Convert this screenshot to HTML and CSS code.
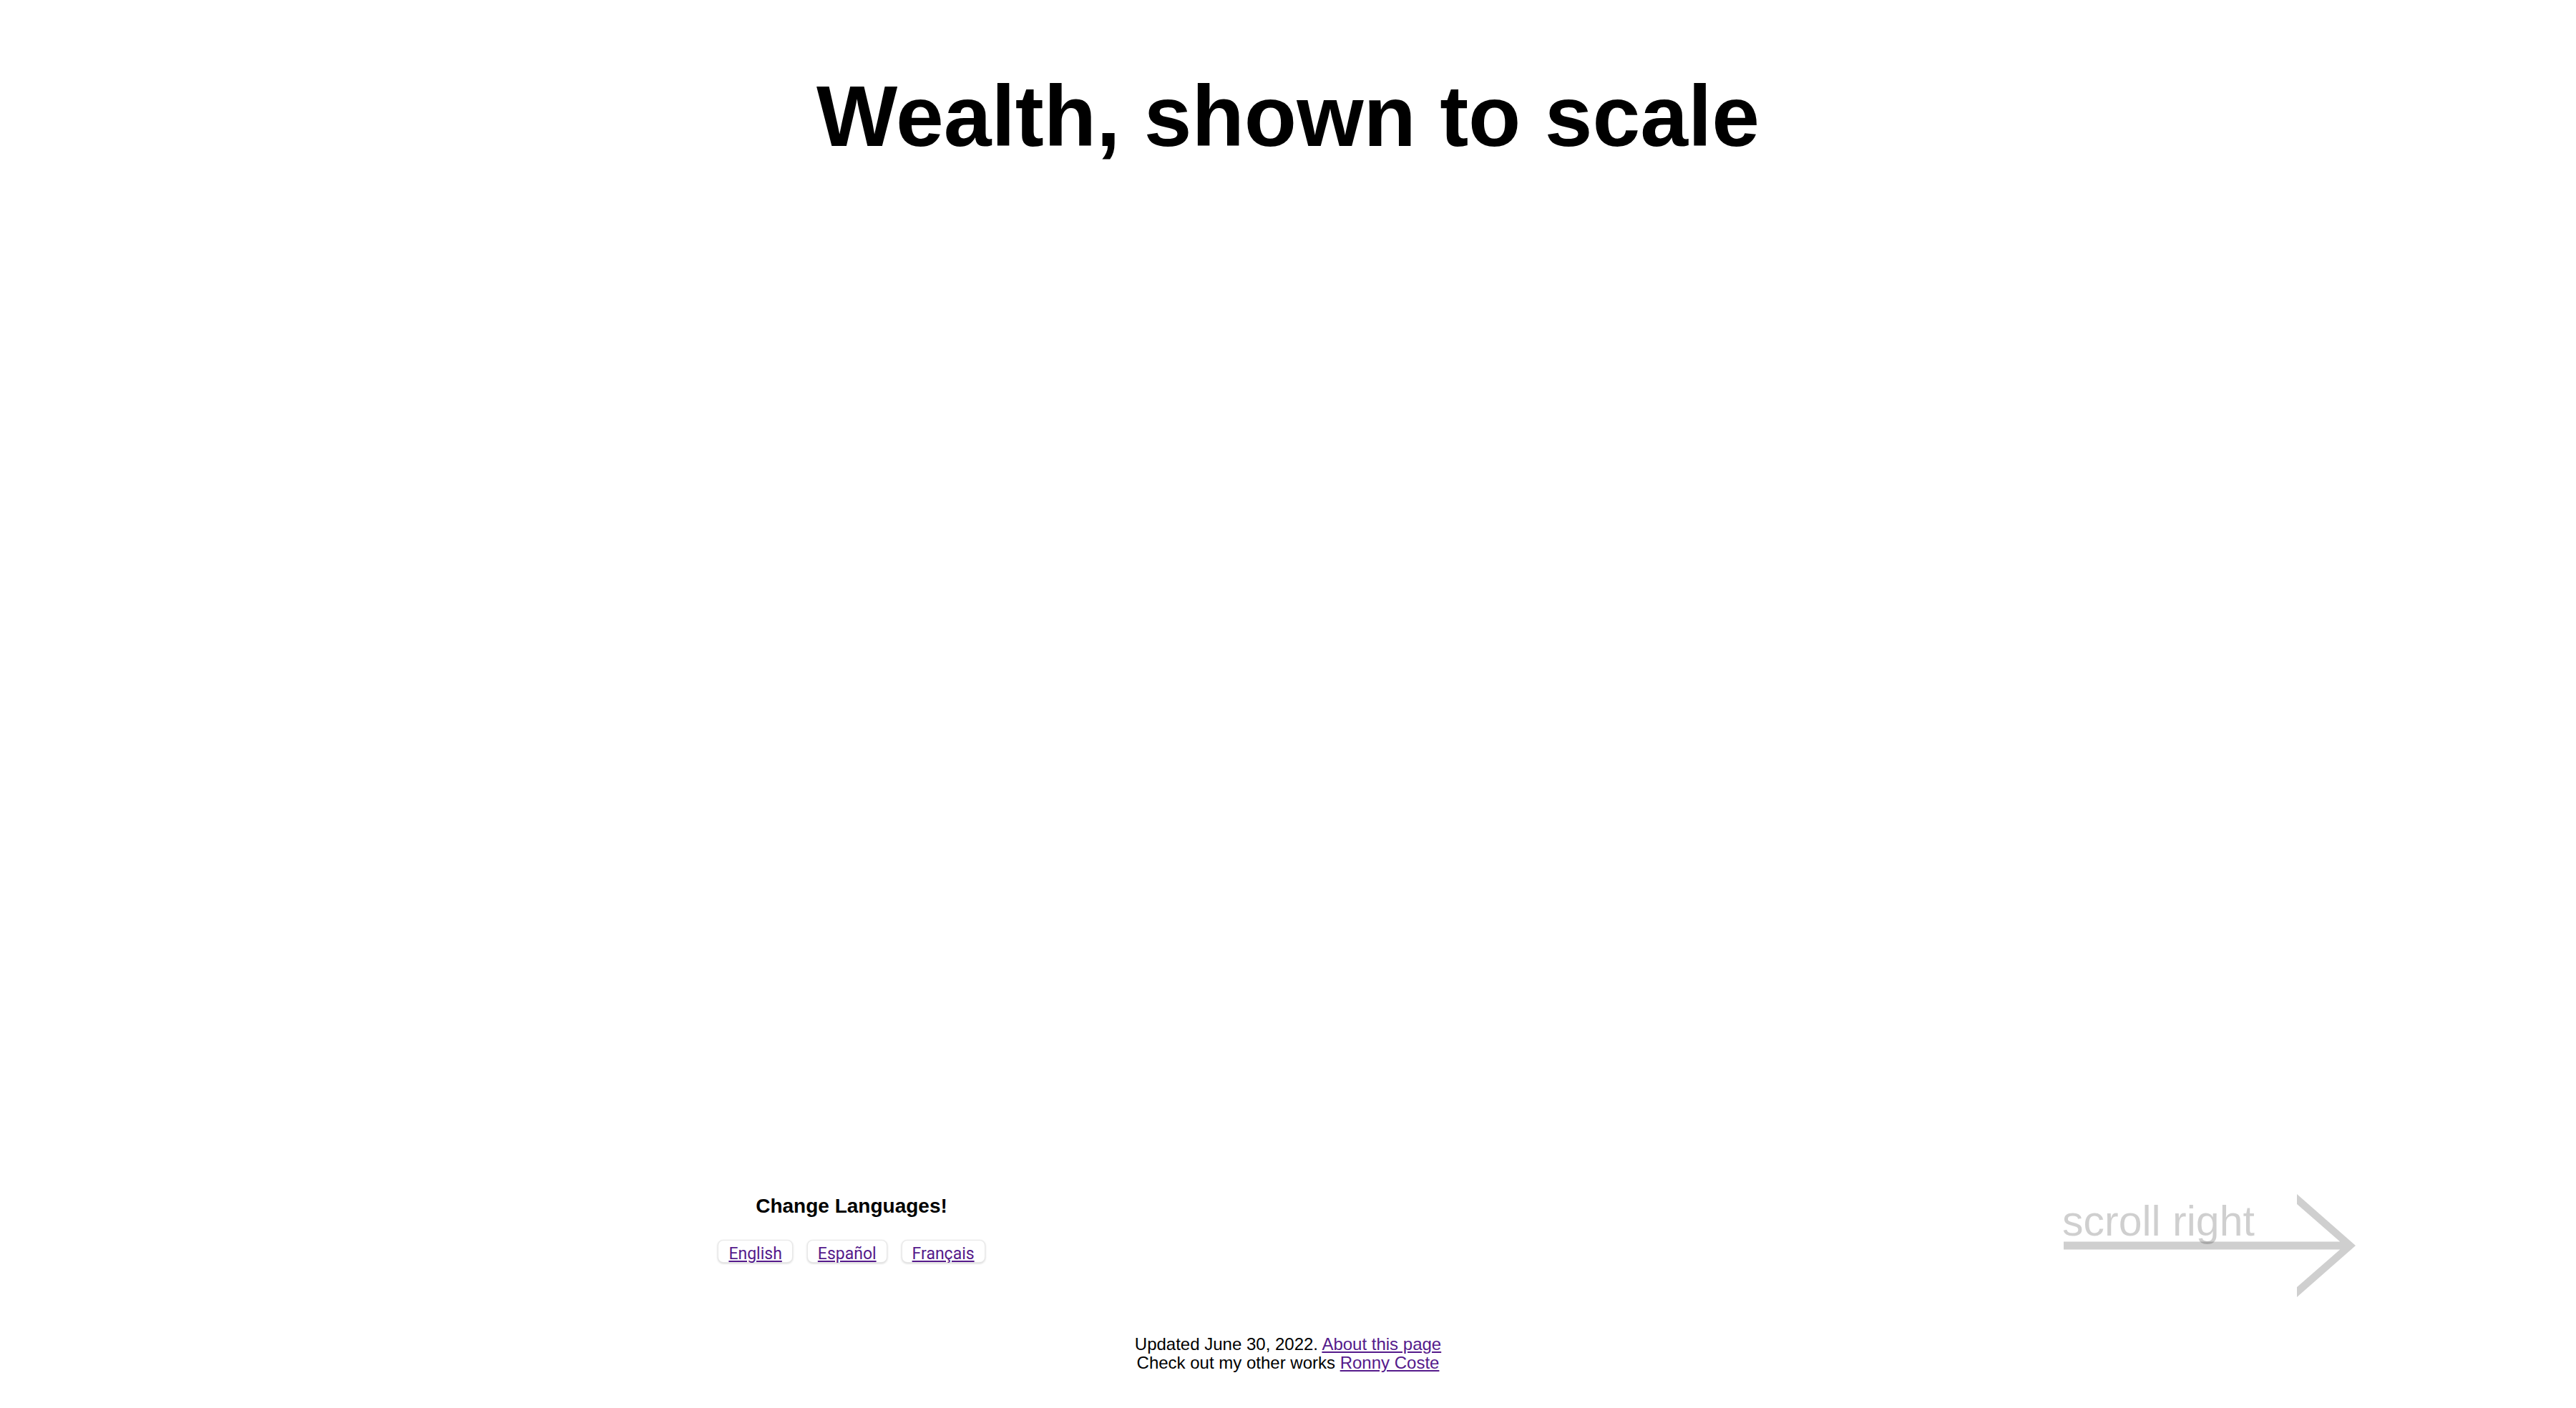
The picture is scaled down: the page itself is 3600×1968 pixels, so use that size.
FILE: index.html
```html
<!DOCTYPE html>
<html lang="en">
<head>
<meta charset="utf-8">
<title>Wealth, shown to scale</title>
<link rel="stylesheet" href="styles.css">
</head>
<body>
  <h1 class="title">Wealth, shown to scale</h1>

  <div class="bottom-row">
    <div class="languages">
      <div class="languages-title">Change Languages!</div>
      <div class="language-buttons">
        <span class="lang-btn"><a href="#">English</a></span>
        <span class="lang-btn"><a href="#">Español</a></span>
        <span class="lang-btn"><a href="#">Français</a></span>
      </div>
    </div>

    <div class="scroll-hint">
      <svg class="scroll-arrow" width="410" height="144" viewBox="0 0 410 144" aria-hidden="true">
        <polygon points="2,66.5 388.2,66.5 328,14 328,0 410,72 328,144 328,130 388.2,77.5 2,77.5"/>
      </svg>
      <span class="scroll-text">scroll right</span>
    </div>
  </div>

  <footer class="footer">
    <div>Updated June 30, 2022. <a href="#">About this page</a></div>
    <div>Check out my other works <a href="#">Ronny Coste</a></div>
  </footer>
</body>
</html>
```

FILE: styles.css
```css
html, body {
  margin: 0;
  padding: 0;
  background: #ffffff;
}

body {
  height: 100vh;
  display: flex;
  flex-direction: column;
  font-family: "Liberation Sans", Arial, Helvetica, sans-serif;
  color: #000;
  padding-bottom: 50px;
  box-sizing: border-box;
}

.title {
  margin: 93px 0 0;
  font-size: 120px;
  line-height: 138px;
  font-weight: 700;
  text-align: center;
}

.bottom-row {
  margin-top: auto;
  display: flex;
  justify-content: space-between;
  align-items: flex-start;
  padding: 0 308px 0 1006px;
}

.languages {
  display: flex;
  flex-direction: column;
  align-items: center;
  width: 368px;
}

.languages-title {
  font-size: 28px;
  line-height: 34px;
  font-weight: 700;
}

.language-buttons {
  margin-top: 30px;
  display: flex;
  gap: 20px;
}

.lang-btn {
  display: block;
  height: 32px;
  box-sizing: border-box;
  padding: 7px 14px 0;
  border: 1px solid rgba(0, 0, 0, 0.09);
  border-radius: 8px;
  box-shadow: 0 1px 3px rgba(0, 0, 0, 0.18);
  background: #fff;
  font-family: Roboto, "Noto Sans", sans-serif;
  font-size: 23px;
  line-height: 23px;
}

.lang-btn a,
.footer a {
  color: #551a8b;
  text-decoration: underline;
}

.scroll-hint {
  position: relative;
  width: 410px;
  height: 144px;
}

.scroll-arrow {
  display: block;
  fill: rgba(0, 0, 0, 0.19);
}

.scroll-text {
  position: absolute;
  left: 0;
  top: 8px;
  font-size: 59px;
  line-height: 60px;
  color: rgba(0, 0, 0, 0.19);
  white-space: nowrap;
}

.footer {
  margin-top: 53px;
  text-align: center;
  font-size: 24px;
  line-height: 26px;
}
```
